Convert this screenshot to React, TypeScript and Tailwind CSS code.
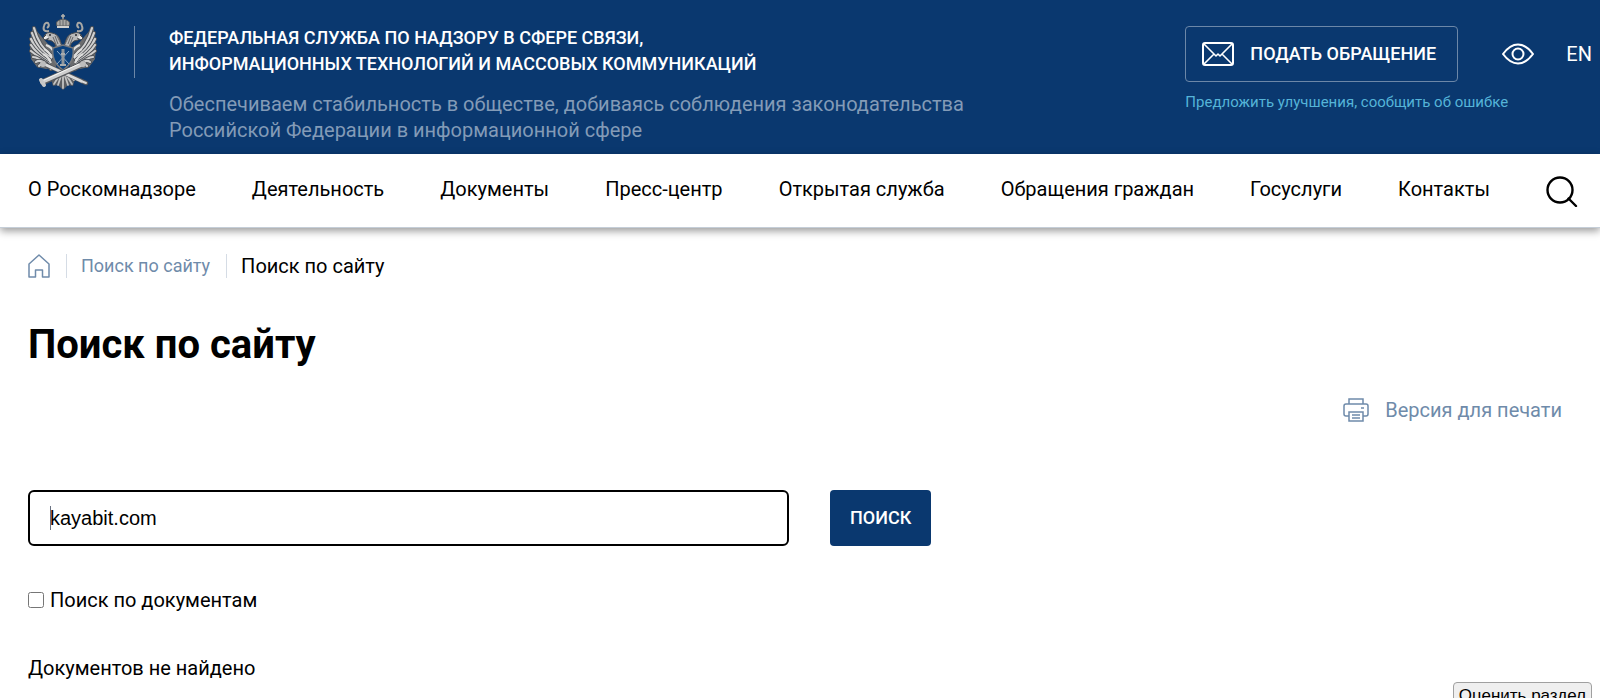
import React, { useState } from 'react';

const NAV_ITEMS = [
  'О Роскомнадзоре',
  'Деятельность',
  'Документы',
  'Пресс-центр',
  'Открытая служба',
  'Обращения граждан',
  'Госуслуги',
  'Контакты',
];

// Feathers of the left wing: tip and root of each one
const FEATHERS = [
  [5, 15, 23, 43],
  [3, 20, 22, 45],
  [2, 26, 21, 47],
  [2, 32, 20, 49],
  [2, 38, 20, 51],
  [4, 44, 20, 53],
  [7, 49, 21, 54],
  [10, 53, 22, 56],
];

const Wing = () => (
  <g>
    <path d="M4 14 C10 20 15 27 19 31 L26 35 L27 54 L17 56 L8 54 L2 46 L1 34 L2 22Z" fill="#6b6c6e" />
    {FEATHERS.map(([x1, y1, x2, y2]) => (
      <g key={y1} strokeLinecap="round">
        <path d={`M${x1} ${y1} Q${x1 + 5} ${y2 - 9} ${x2} ${y2}`} stroke="#4f5257" strokeWidth="4" fill="none" />
        <path d={`M${x1} ${y1} Q${x1 + 5} ${y2 - 9} ${x2} ${y2}`} stroke="#d0d0d0" strokeWidth="2.200" fill="none" />
      </g>
    ))}
    <path d="M17 32 Q23 34 25 40 M15 36 Q20 38 23 45 M14 41 Q19 43 22 50" stroke="#dededd" strokeWidth="2" fill="none" />
    {/* head and neck */}
    <path d="M15 24 Q17 18 23 20 Q29 21 31 27 L33 34 L27 35 Q27 30 23 28 L19 27 Z" fill="#b9b9b9" stroke="#4a4b4e" strokeWidth="1" />
    <path d="M17 22 L14 25 L16 27 L20 25" fill="#e9e9e8" stroke="#4a4b4e" strokeWidth="1" />
    <circle cx="21" cy="22" r="1" fill="#26292f" />
    <path d="M26 23 L29 31 M24 24 L28 34 M28 23 L32 31" stroke="#66676a" strokeWidth="1" />
    {/* ribbon */}
    <path d="M20 18 Q13 19 15 13 Q16 9 19 10 Q21 13 18 15" stroke="#a9a8a5" strokeWidth="2" fill="none" />
  </g>
);

const Emblem = () => (
  <svg viewBox="0 0 68 77" className="h-[77px] w-[68px] shrink-0" role="img" aria-label="Герб">
    <Wing />
    <g transform="translate(68 0) scale(-1 1)">
      <Wing />
    </g>
    {/* crown */}
    <path d="M34 1 V7 M32 3 H36" stroke="#b5b3ae" strokeWidth="1.500" />
    <path d="M28 13 Q26 8 31 7 Q34 5 37 7 Q42 8 40 13 Z" fill="#a8a7a4" stroke="#595a5c" strokeWidth="1" />
    <path d="M34 6 V13 M31 8 L31 13 M37 8 L37 13" stroke="#65666a" strokeWidth="1" />
    <path d="M28 14 H40" stroke="#d2d1cf" strokeWidth="2" />
    {/* tail */}
    <path d="M34 56 L22 66 L24 73 L29 72 L34 77 L39 72 L44 73 L46 66 Z" fill="#5b5d61" />
    <path
      d="M34 60 V75 M33 60 L29 72 M35 60 L39 72 M32 60 L25 71 M36 60 L43 71 M31 59 L23 67 M37 59 L45 67"
      stroke="#c4c4c3"
      strokeWidth="1.800"
      strokeLinecap="round"
    />
    {/* shield */}
    <path d="M24 35 L34 32 L44 35 Q46 49 34 57 Q22 49 24 35Z" fill="#0c427e" stroke="#77797d" strokeWidth="1.500" />
    <path d="M28 38 L40 51 M40 38 L28 51" stroke="#8ca7c4" strokeWidth="1" />
    <path d="M34 36 V53" stroke="#8f969c" strokeWidth="3" />
    <path d="M31 52 H37 M32 41 H36" stroke="#a9acae" strokeWidth="2" />
    {/* crossed cannons */}
    <g strokeLinecap="round">
      <path d="M15 51 L57 70" stroke="#56585c" strokeWidth="4.500" />
      <path d="M15 51 L52 68" stroke="#dadada" strokeWidth="3" />
      <path d="M52 68 L57 70" stroke="#dadada" strokeWidth="2" />
      <path d="M14 69 L54 51" stroke="#56585c" strokeWidth="6" />
      <path d="M13 69 L54 51" stroke="#cfcfcf" strokeWidth="4" />
      <path d="M13 68 L50 51" stroke="#f7f7f5" strokeWidth="1" />
      <path d="M12 67 L15 72" stroke="#c8c8c8" strokeWidth="4" />
    </g>
    <circle cx="14" cy="51" r="3" fill="#bdbdbd" />
    <circle cx="54" cy="51" r="3" fill="#bdbdbd" />
  </svg>
);

const MailIcon = () => (
  <svg viewBox="0 0 32 24" className="h-6 w-8" fill="none" stroke="currentColor" strokeWidth="2" strokeLinejoin="round">
    <rect x="1" y="1" width="30" height="22" rx="2" />
    <path d="M2 2 L14 14 L16 12 L18 14 L30 2 M2 22 L12 12 M30 22 L20 12" strokeWidth="1.600" />
  </svg>
);

const EyeIcon = () => (
  <svg viewBox="0 0 32 22" className="h-[22px] w-8" fill="none" stroke="currentColor" strokeWidth="2" strokeLinejoin="round">
    <path d="M1 11 Q8 1.500 16 1.500 Q24 1.500 31 11 Q24 20.500 16 20.500 Q8 20.500 1 11Z" />
    <circle cx="16" cy="11" r="5.500" />
  </svg>
);

const SearchIcon = () => (
  <svg viewBox="0 0 32 32" className="h-8 w-8" fill="none" stroke="currentColor" strokeWidth="2.400" strokeLinecap="round">
    <circle cx="14" cy="15" r="12.500" />
    <path d="M22.500 23.500 L30 31" />
  </svg>
);

const HomeIcon = () => (
  <svg viewBox="0 0 22 24" className="h-6 w-[22px]" fill="none" stroke="currentColor" strokeWidth="1.500" strokeLinejoin="round">
    <path d="M1 10 L11 1 L21 10 V23 H14.500 V16 H7.500 V23 H1Z" />
  </svg>
);

const PrintIcon = () => (
  <svg viewBox="0 0 26 24" className="h-6 w-[26px]" fill="none" stroke="currentColor" strokeWidth="1.500">
    <path d="M6 6 V1 H20 V6 M6 18 H3 Q1 18 1 16 V8 Q1 6 3 6 H23 Q25 6 25 8 V16 Q25 18 23 18 H20" />
    <path d="M6 14 H20 V23 H6Z M9 17 H17 M9 20 H17 M18 10 H21" />
  </svg>
);

export default function App() {
  const [query, setQuery] = useState('kayabit.com');

  return (
    <div className="bg-white font-[Roboto,'Noto_Sans',sans-serif] text-xl text-black">
      <header className="flex items-start justify-between bg-[#0a386f] pt-[13px] pr-2 pb-[11px] pl-[29px] text-white">
        <div className="flex items-start">
          <Emblem />
          <div className="mt-[13px] ml-[37px] h-[52px] w-px bg-[#6c87a8]" />
          <div className="mt-3 ml-[34px] leading-[26px]">
            <p className="text-lg leading-[26px] font-medium uppercase">
              Федеральная служба по надзору в сфере связи,
              <br />
              информационных технологий и массовых коммуникаций
            </p>
            <p className="mt-[14px] text-[#839bb7]">
              Обеспечиваем стабильность в обществе, добиваясь соблюдения законодательства
              <br />
              Российской Федерации в информационной сфере
            </p>
          </div>
        </div>

        <div className="mt-[13px]">
          <div className="flex items-center">
            <button type="button" className="flex h-14 w-[273px] items-center gap-4 rounded border border-[#6c87a8] pl-4 text-lg font-medium uppercase">
              <MailIcon />
              Подать обращение
            </button>
            <button type="button" aria-label="Версия для слабовидящих" className="ml-11">
              <EyeIcon />
            </button>
            <a href="#en" className="ml-8">EN</a>
          </div>
          <a href="#feedback" className="mt-2 block text-[15px] leading-6 text-[#55b4d8]">
            Предложить улучшения, сообщить об ошибке
          </a>
        </div>
      </header>

      <nav className="flex h-[74px] items-center border-b border-[#c5ced8] pr-[22px] pl-7 shadow-[0_3px_8px_rgba(0,0,0,0.4)]">
        <ul className="flex flex-1 justify-between pb-1">
          {NAV_ITEMS.map((item) => (
            <li key={item}>
              <a href="#nav">{item}</a>
            </li>
          ))}
        </ul>
        <button type="button" aria-label="Поиск" className="ml-14">
          <SearchIcon />
        </button>
      </nav>

      <main className="px-7 pt-6">
        <div className="flex h-7 items-center">
          <a href="#home" aria-label="Главная" className="text-[#6f8baa]">
            <HomeIcon />
          </a>
          <a href="#search" className="ml-4 border-l border-[#d5dce5] pl-[14px] text-lg leading-6 text-[#6f8baa]">
            Поиск по сайту
          </a>
          <span className="ml-4 border-l border-[#d5dce5] pl-[14px] leading-6">Поиск по сайту</span>
        </div>

        <h1 className="mt-10 text-[40px] leading-[50px] font-bold">Поиск по сайту</h1>

        <div className="mt-[26px] mr-[10px] flex justify-end">
          <a href="#print" className="flex items-center gap-4 text-[#6f8baa]">
            <PrintIcon />
            Версия для печати
          </a>
        </div>

        <form onSubmit={(e) => e.preventDefault()} className="mt-[66px]">
          <div className="flex gap-[41px]">
            <div className="relative w-[calc(50%-11px)]">
              <input
                type="text"
                aria-label="Поисковый запрос"
                value={query}
                onChange={(e) => setQuery(e.target.value)}
                className="h-14 w-full rounded-md border-2 border-black px-5 font-['Liberation_Sans',sans-serif] text-xl outline-none"
              />
              <span className="absolute top-4 left-[22px] h-6 w-px bg-gray-500" />
            </div>
            <button type="submit" className="h-14 rounded bg-[#0a386f] px-5 text-lg font-medium text-white uppercase">
              Поиск
            </button>
          </div>
          <label className="mt-10 flex items-center gap-[6px]">
            <input type="checkbox" className="h-4 w-4" />
            Поиск по документам
          </label>
        </form>

        <p className="mt-10">Документов не найдено</p>
      </main>

      <button type="button" className="fixed right-2 -bottom-3 h-7 rounded-sm border border-[#a0a0a0] bg-[#efefef] px-[5px] font-['Liberation_Sans',sans-serif] text-[17px]">
        Оценить раздел
      </button>
    </div>
  );
}
